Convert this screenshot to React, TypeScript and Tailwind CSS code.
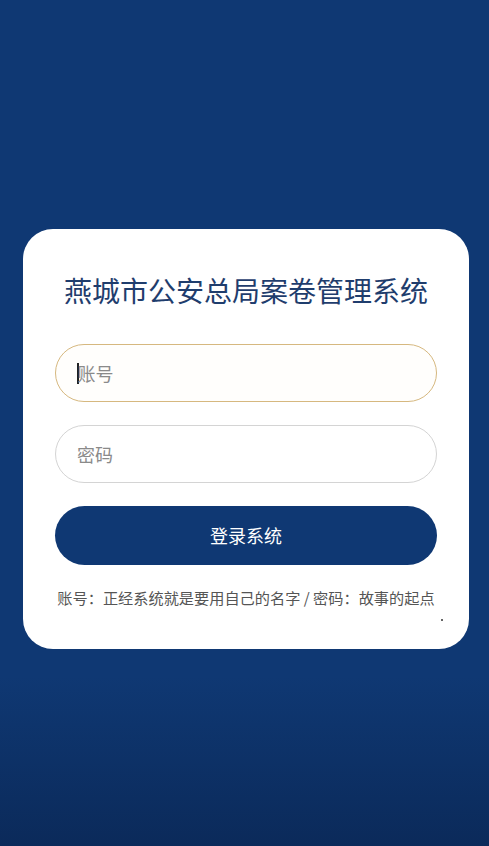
import React from "react";

export default function App() {
  return (
    <div
      className="relative min-h-[846px] w-full bg-[linear-gradient(to_bottom,#0f3873_0%,#0f3873_80%,#0b2a5a_100%)] pt-[229px]"
      style={{ fontFamily: '"Noto Sans CJK SC", "Noto Sans", sans-serif' }}
    >
      <div className="relative ml-[23px] flex w-[446px] flex-col rounded-[30px] bg-white px-[32px] pb-[40px] pt-[41px]">
        <h1 className="text-center text-[28px] leading-[40px] font-normal text-[#1f3d6d]">
          燕城市公安总局案卷管理系统
        </h1>
        <div className="mt-[34px] flex h-[58px] items-center rounded-full border border-[#d6b87f] bg-[#fffefc] pl-[21px]">
          <span className="mr-[-1px] h-[21px] w-[1.5px] bg-[#222]" />
          <span className="text-[18px] text-[#8a8a8a]">账号</span>
        </div>
        <div className="mt-[23px] flex h-[58px] items-center rounded-full border border-[#d4d4d4] bg-white pl-[21px]">
          <span className="text-[18px] text-[#8a8a8a]">密码</span>
        </div>
        <button className="mt-[23px] flex h-[59px] items-center justify-center rounded-full bg-[#0f3873] text-[18px] text-white">
          登录系统
        </button>
        <p className="mt-[20px] whitespace-nowrap text-center text-[15.2px] leading-[24px] text-[#555]">
          账号：正经系统就是要用自己的名字 / 密码：故事的起点
        </p>
        <span className="absolute left-[418px] top-[390px] h-[1.5px] w-[1.5px] rounded-full bg-[#333]" />
      </div>
    </div>
  );
}
